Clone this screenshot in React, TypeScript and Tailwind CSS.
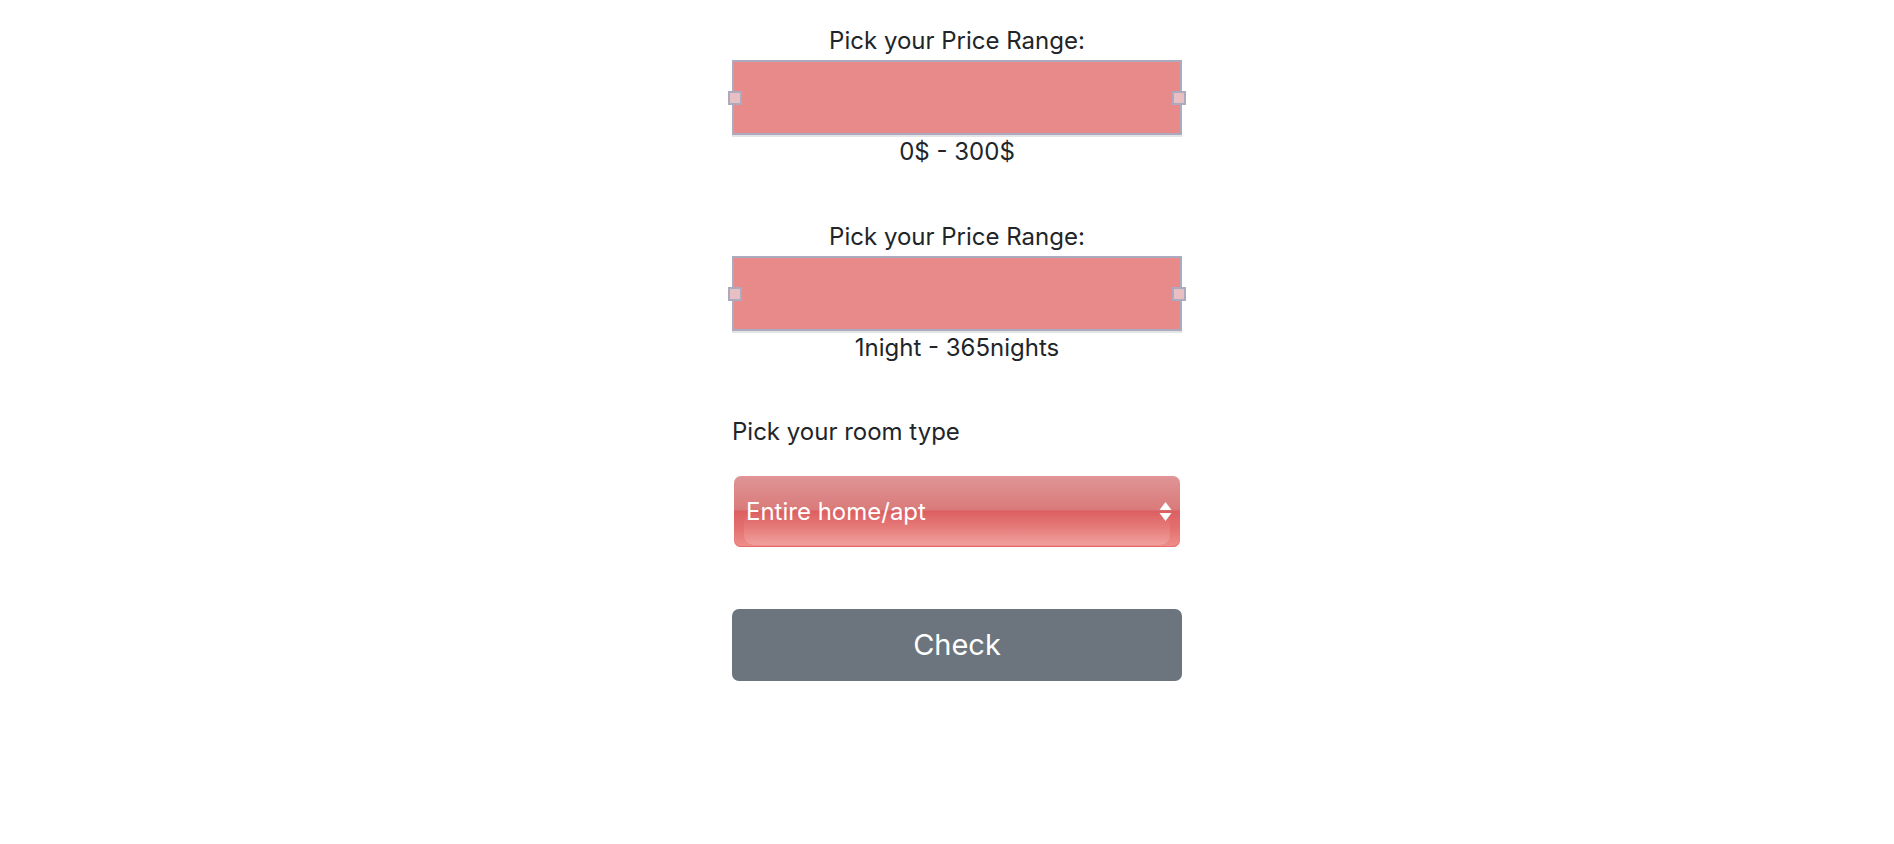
import React from "react";

const RangeBox = () => (
  <div className="relative">
    <div className="h-[75px] w-full border-2 border-[#acaabf] bg-[#e98a8a]" />
    <div className="h-[2px] w-full bg-[#e4e4e6]" />
    <span className="absolute left-[-4px] top-[31px] h-[14px] w-[14px] border-2 border-[#acaabf] bg-[#e8c0c4]" />
    <span className="absolute right-[-4px] top-[31px] h-[14px] w-[14px] border-2 border-[#acaabf] bg-[#e8c0c4]" />
  </div>
);

const RangeBlock = ({ label, value }: { label: string; value: string }) => (
  <div className="flex flex-col">
    <p className="mb-[5px] text-center text-[24px] leading-[28px]">{label}</p>
    <RangeBox />
    <p className="mt-[1px] text-center text-[24px] leading-[28px]">{value}</p>
  </div>
);

export default function App() {
  return (
    <div className="flex min-h-[844px] justify-center bg-white pl-[20px] font-['Inter',sans-serif] text-[#212529]">
      <div className="flex w-[450px] flex-col pt-[27px]">
        <RangeBlock label="Pick your Price Range:" value="0$ - 300$" />
        <div className="h-[57px]" />
        <RangeBlock label="Pick your Price Range:" value="1night - 365nights" />
        <p className="mt-[56px] text-[24px] leading-[28px]">Pick your room type</p>

        <div className="relative mx-[2px] mt-[30px] h-[71px] overflow-hidden rounded-[7px] bg-[linear-gradient(to_bottom,#e09596_0%,#d97a7a_48%,#dc5f61_49%,#e4716f_75%,#ef8f8c_100%)] shadow-[inset_0_-1px_0_#e86a6a]">
          <div className="absolute inset-x-[10px] bottom-[2px] top-[36px] rounded-[10px] bg-[linear-gradient(to_bottom,rgba(255,255,255,0)_0%,rgba(255,255,255,0.18)_100%)]" />
          <div className="relative flex h-full items-center justify-between pl-[12px] pr-[8px]">
            <span className="text-[24px] text-white">Entire home/apt</span>
            <svg width="13" height="21" viewBox="0 0 13 21" className="fill-white">
              <path d="M6.5 1 L12.5 9 L0.5 9 Z" />
              <path d="M0.5 12 L12.5 12 L6.5 20 Z" />
            </svg>
          </div>
        </div>

        <button className="mt-[62px] h-[72px] w-full rounded-[7px] bg-[#6c757d] text-[29px] text-white">
          Check
        </button>
      </div>
    </div>
  );
}
